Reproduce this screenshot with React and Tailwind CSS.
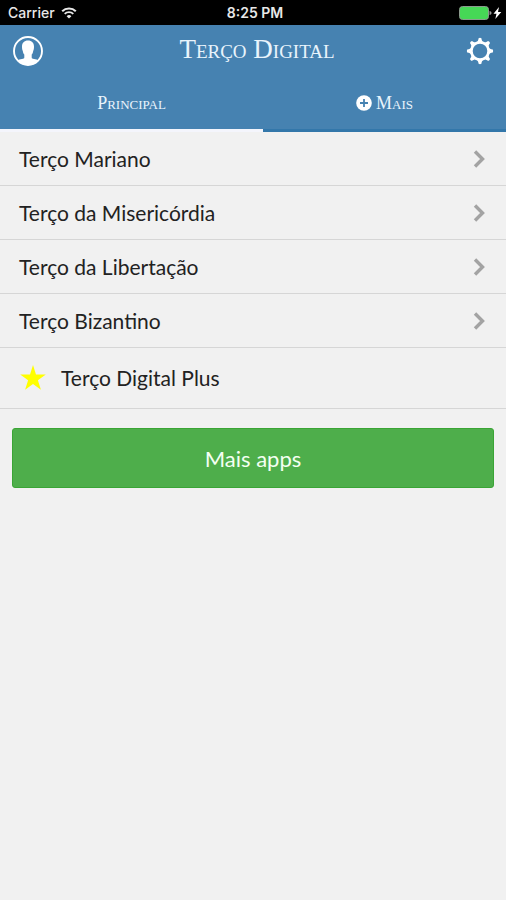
import { useState } from 'react';

const chaplets = [
  'Terço Mariano',
  'Terço da Misericórdia',
  'Terço da Libertação',
  'Terço Bizantino',
];

const WifiIcon = () => (
  <svg className="h-3 w-4" viewBox="0 0 16 12" fill="none" stroke="#e8e8e8">
    <path d="M1.2 4.2a9.8 9.8 0 0 1 13.6 0" strokeWidth="2.1" />
    <path d="M3.7 6.9a6.2 6.2 0 0 1 8.6 0" strokeWidth="1.9" />
    <path d="M8 11.6 5.6 9.2a3.4 3.4 0 0 1 4.8 0Z" fill="#e8e8e8" stroke="none" />
  </svg>
);

const BatteryIcon = () => (
  <svg className="h-4 w-11" viewBox="0 0 44 16">
    <rect x="1.5" y="1.5" width="29" height="13" rx="3" fill="#46d856" stroke="#8d9a8e" />
    <path d="M31.5 6v4c1.3-.3 2-1 2-2s-.7-1.7-2-2Z" fill="#9a9a9a" />
    <path d="M41 2 35.500 8.800h3L37.300 14l6-7h-3.300Z" fill="#fff" />
  </svg>
);

const ProfileIcon = () => (
  <svg className="size-8" viewBox="0 0 32 32">
    <circle cx="16" cy="16" r="14" fill="none" stroke="#fff" strokeWidth="1.9" />
    <path
      d="M16 5.500c-3.800 0-6 2.400-6 6 0 1.800.2 3.200.8 4.400.3 1.900.8 2.900 1.500 3.700v2.900c0 1-.9 1.300-2.300 1.600-2 .3-3.400.6-4.500 1.600A14 14 0 0 0 16 30a14 14 0 0 0 10.500-4.300c-1.100-1-2.500-1.300-4.500-1.600-1.400-.3-2.300-.6-2.300-1.600v-2.900c.7-.8 1.200-1.800 1.500-3.700.6-1.200.8-2.600.8-4.400 0-3.600-2.200-6-6-6Z"
      fill="#fff"
    />
  </svg>
);

const teeth = [0, 45, 90, 135, 180, 225, 270, 315];

const GearIcon = () => (
  <svg className="size-7" viewBox="0 0 28 28">
    <circle cx="14" cy="14" r="8.6" fill="none" stroke="#fff" strokeWidth="2.6" />
    {teeth.map((angle) => (
      <path
        key={angle}
        d="M9.700 5.500c2-.6 2.600-2.300 2.900-4.300q1.400-.8 2.800 0c.3 2 .9 3.700 2.900 4.300Z"
        fill="#fff"
        transform={`rotate(${angle} 14 14)`}
      />
    ))}
  </svg>
);

const PlusIcon = () => (
  <svg className="size-4" viewBox="0 0 16 16">
    <circle cx="8" cy="8" r="7.8" fill="#fff" />
    <path d="M8 4v8M4 8h8" stroke="#4682b1" strokeWidth="1.8" />
  </svg>
);

const ChevronIcon = () => (
  <svg className="h-5 w-3" viewBox="0 0 12 20" fill="none">
    <path d="m2 2.500 7.500 7.500L2 17.500" stroke="#a3a3a3" strokeWidth="3.400" />
  </svg>
);

const StarIcon = () => (
  <svg className="size-7" viewBox="0 0 28 28">
    <path
      d="m14 1 3 9.400h9.800l-7.900 5.800 3 9.500-7.900-5.800-7.900 5.800 3-9.500L1.200 10.400H11Z"
      fill="#ff0"
    />
  </svg>
);

const App = () => {
  const [tab, setTab] = useState('principal');

  return (
    <div className="min-h-screen bg-[#f1f1f1] font-['Lato',sans-serif] text-[#222]">
      <div className="grid h-[25px] grid-cols-3 items-center bg-black pr-1 pl-2 font-['Inter',sans-serif] text-sm font-medium text-[#e8e8e8]">
        <div className="flex items-center gap-[6px]">
          <span>Carrier</span>
          <WifiIcon />
        </div>
        <span className="text-center font-semibold">8:25 PM</span>
        <div className="flex justify-end">
          <BatteryIcon />
        </div>
      </div>

      <header className="bg-[#4682b1] font-['Liberation_Serif',serif] text-[#e9f4fc] [font-variant:small-caps]">
        <div className="grid h-[52px] grid-cols-[32px_1fr_32px] items-center px-3">
          <button aria-label="Perfil">
            <ProfileIcon />
          </button>
          <h1 className="pb-1 pl-2 text-center text-[27px]">Terço Digital</h1>
          <button aria-label="Configurações" className="justify-self-end">
            <GearIcon />
          </button>
        </div>

        <nav className="flex h-[55px]">
          <button
            onClick={() => setTab('principal')}
            className={`w-[52%] border-b-3 text-lg ${
              tab === 'principal' ? 'border-[#f4f5fc]' : 'border-[#3377aa]'
            }`}
          >
            Principal
          </button>
          <button
            onClick={() => setTab('mais')}
            className={`flex flex-1 items-center justify-center gap-1 border-b-3 text-lg ${
              tab === 'mais' ? 'border-[#f4f5fc]' : 'border-[#3377aa]'
            }`}
          >
            <PlusIcon />
            Mais
          </button>
        </nav>
      </header>

      <main>
        <ul>
          {chaplets.map((name) => (
            <li key={name} className="border-b border-[#d6d6d6]">
              <a
                href="#"
                className="flex h-[53px] items-center justify-between pr-[21px] pl-[19px] text-[21px]"
              >
                {name}
                <ChevronIcon />
              </a>
            </li>
          ))}
          <li className="border-b border-[#d6d6d6]">
            <a
              href="#"
              className="flex h-[60px] items-center gap-[14px] px-[19px] pb-px text-[21px]"
            >
              <StarIcon />
              Terço Digital Plus
            </a>
          </li>
        </ul>

        <div className="px-3 py-[19px]">
          <button className="h-[60px] w-full rounded-[3px] border border-[#3aa535] bg-[#4eae4b] text-[22px] text-[#f3fff2]">
            Mais apps
          </button>
        </div>
      </main>
    </div>
  );
};

export default App;
